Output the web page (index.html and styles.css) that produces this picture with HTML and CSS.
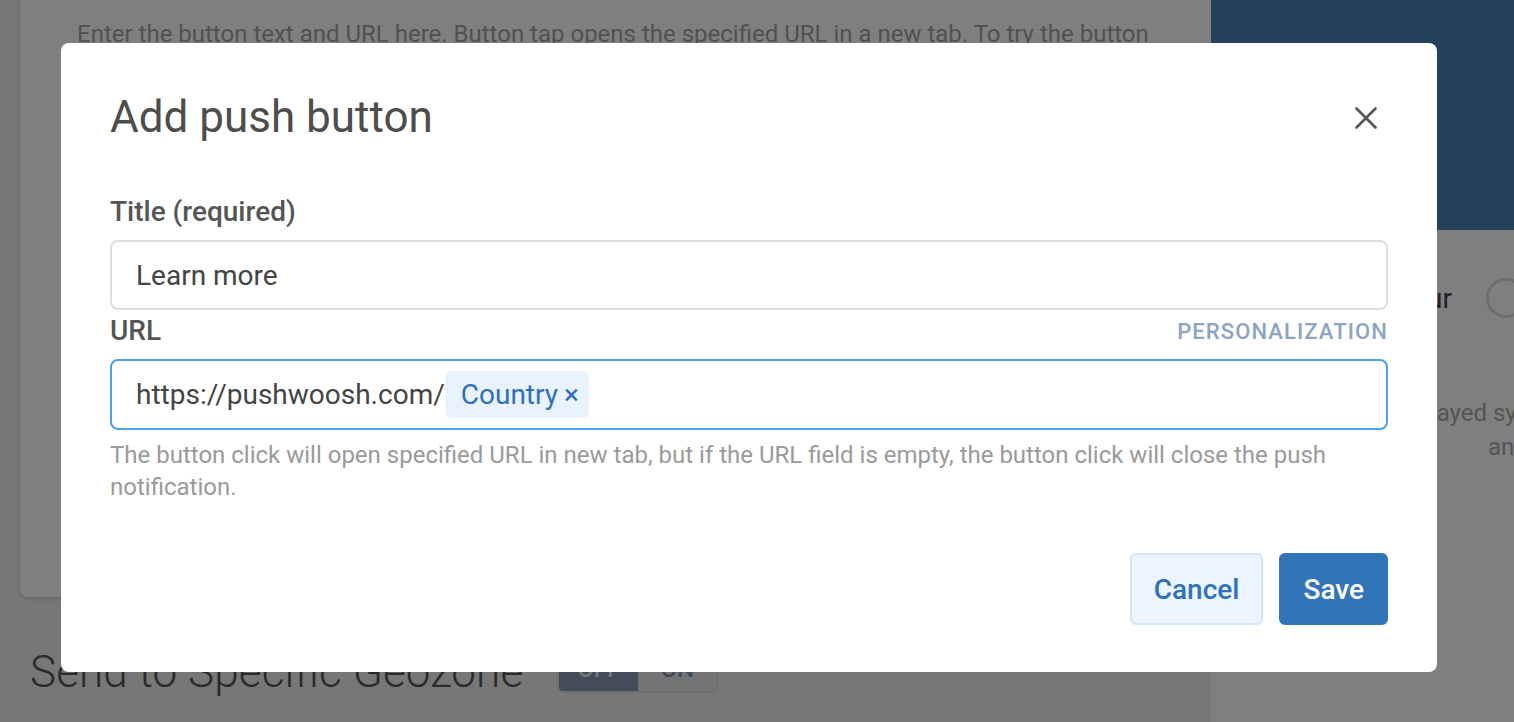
FILE: index.html
```html
<!DOCTYPE html>
<html lang="en">

<head>
    <meta charset="UTF-8">
    <meta name="viewport" content="width=device-width, initial-scale=1.0">
    <title>Add push button</title>
    <link rel="stylesheet" href="styles.css">
</head>

<body>
    <div class="page">
        <div class="main">
            <section class="card">
                <h3 class="card-title">Buttons</h3>
                <p class="card-text">Enter the button text and URL here. Button tap opens the specified URL in a new tab. To try the button</p>
            </section>

            <div class="geozone">
                <h2 class="geozone-title">Send to Specific Geozone</h2>
                <div class="toggle">
                    <span class="toggle-off">OFF</span>
                    <span class="toggle-on">ON</span>
                </div>
            </div>
        </div>

        <aside class="side">
            <div class="preview"></div>
            <div class="side-row">
                <span class="side-label">Show icon colour</span>
                <span class="radio"></span>
            </div>
            <p class="side-note">
                <span class="note-line">Buttons are displayed synchronously</span>
                <span class="note-line note-line-2">and may vary</span>
            </p>
        </aside>
    </div>

    <div class="overlay">
        <div class="modal">
            <div class="modal-header">
                <h2 class="modal-title">Add push button</h2>
                <button class="close" type="button" aria-label="Close">
                    <svg width="22" height="22" viewBox="0 0 22 22">
                        <path d="M1.5 1.5 L20.5 20.5 M20.5 1.5 L1.5 20.5" stroke="#555" stroke-width="2.6" stroke-linecap="round" fill="none"/>
                    </svg>
                </button>
            </div>

            <label class="field-label" for="btnTitle">Title (required)</label>
            <div class="input" id="btnTitle">Learn more</div>

            <div class="url-row">
                <span class="field-label">URL</span>
                <a class="personalize" href="#">PERSONALIZATION</a>
            </div>
            <div class="input input-focus">
                <span>https://pushwoosh.com/</span>
                <span class="chip">Country<span class="chip-x">×</span></span>
            </div>
            <p class="hint">The button click will open specified URL in new tab, but if the URL field is empty, the button click will close the push notification.</p>

            <div class="modal-footer">
                <button type="button" class="btn btn-cancel">Cancel</button>
                <button type="button" class="btn btn-save">Save</button>
            </div>
        </div>
    </div>
</body>

</html>
```

FILE: styles.css
```css
body {
    margin: 0;
    font-family: Roboto, "Liberation Sans", Arial, sans-serif;
    overflow: hidden;
}

/* page behind the dialog */

.page {
    display: flex;
    height: 722px;
    background-color: #eeeeee;
    overflow: hidden;
}

.main {
    flex: 1;
    padding-left: 20px;
}

.card {
    height: 627px;
    margin-top: -30px;
    padding: 0 58px;
    box-sizing: border-box;
    background-color: #fff;
    border-radius: 0 0 8px 8px;
    box-shadow: 0 2px 4px rgba(0, 0, 0, 0.12);
}

.card-title {
    margin: 0;
    font-size: 28px;
    line-height: 33px;
    font-weight: 500;
    color: #444;
}

.card-text {
    margin: 15px 0 0 -1px;
    font-size: 24px;
    line-height: 32px;
    color: #a3a3a3;
    white-space: nowrap;
}

.geozone {
    display: flex;
    align-items: flex-start;
    gap: 34px;
    margin-top: 38px;
    padding-left: 10px;
}

.geozone-title {
    margin: 11px 0 0;
    font-size: 44px;
    line-height: 52px;
    font-weight: 300;
    letter-spacing: 0.1px;
    color: #555;
}

.toggle {
    display: flex;
    height: 58px;
    border: 2px solid #dedede;
    border-radius: 6px;
    overflow: hidden;
    box-sizing: border-box;
    font-size: 24px;
    font-weight: 500;
}

.toggle span {
    display: flex;
    align-items: center;
    justify-content: center;
    padding-top: 10px;
}

.toggle-off {
    width: 79px;
    background-color: #869ab4;
    color: #f0f0f0;
}

.toggle-on {
    width: 78px;
    background-color: #e6e6e6;
    color: #7e94b0;
}

.side {
    width: 303px;
    background-color: #fff;
}

.preview {
    height: 230px;
    background-color: #4682b4;
}

.side-row {
    display: flex;
    align-items: center;
    justify-content: flex-end;
    gap: 34px;
    height: 40px;
    margin: 48px -12px 0 0;
}

.side-label {
    font-size: 28px;
    color: #444;
    white-space: nowrap;
}

.radio {
    width: 34px;
    height: 34px;
    border: 3px solid #dcdcdc;
    border-radius: 50%;
    flex-shrink: 0;
}

.side-note {
    margin: 78px 0 0;
    font-size: 24px;
    line-height: 34px;
    color: #aaa;
}

.note-line {
    display: block;
    margin-left: 46px;
    white-space: nowrap;
}

.note-line-2 {
    margin-left: 277px;
}

/* dialog */

.overlay {
    position: fixed;
    inset: 0;
    padding: 43px 0 0 61px;
    background-color: rgba(0, 0, 0, 0.5);
}

.modal {
    width: 1376px;
    padding: 48px 49px 47px 49px;
    box-sizing: border-box;
    background-color: #fff;
    border-radius: 8px;
}

.modal-header {
    display: flex;
    align-items: center;
    justify-content: space-between;
}

.modal-title {
    margin: 0;
    font-size: 44px;
    line-height: 53px;
    font-weight: 400;
    color: #4d4d4d;
}

.close {
    display: flex;
    padding: 0;
    margin-right: 11px;
    border: none;
    background: none;
    cursor: pointer;
}

.field-label {
    display: block;
    margin-top: 48px;
    font-size: 28px;
    line-height: 40px;
    font-weight: 500;
    color: #555;
}

.input {
    display: flex;
    align-items: center;
    height: 70px;
    margin-top: 8px;
    padding: 0 24px;
    box-sizing: border-box;
    border: 2px solid #dedede;
    border-radius: 8px;
    font-size: 28px;
    color: #444;
}

.input-focus {
    height: 71px;
    border-color: #4a9ff0;
}

.url-row {
    display: flex;
    align-items: center;
    justify-content: space-between;
    height: 40px;
    margin-top: 1px;
}

.url-row .field-label {
    margin-top: 0;
}

.personalize {
    font-size: 22px;
    font-weight: 500;
    letter-spacing: 1.1px;
    color: #8da4c2;
    text-decoration: none;
}

.chip {
    display: flex;
    align-items: center;
    height: 47px;
    padding: 0 10px 0 16px;
    background-color: #e9f3fe;
    border-radius: 6px;
    color: #2f6fbd;
}

.chip-x {
    margin-left: 6px;
}

.hint {
    margin: 9px 0 0;
    font-size: 24px;
    line-height: 32px;
    color: #9a9a9a;
}

.modal-footer {
    display: flex;
    justify-content: flex-end;
    gap: 16px;
    margin-top: 50px;
}

.btn {
    height: 72px;
    padding: 0 22px;
    border-radius: 6px;
    font-family: inherit;
    font-size: 28px;
    font-weight: 500;
    cursor: pointer;
}

.btn-cancel {
    background-color: #ecf5ff;
    border: 2px solid #cfe6fc;
    color: #2f72b8;
}

.btn-save {
    background-color: #3174b8;
    border: 2px solid #3174b8;
    color: #fff;
}
```
